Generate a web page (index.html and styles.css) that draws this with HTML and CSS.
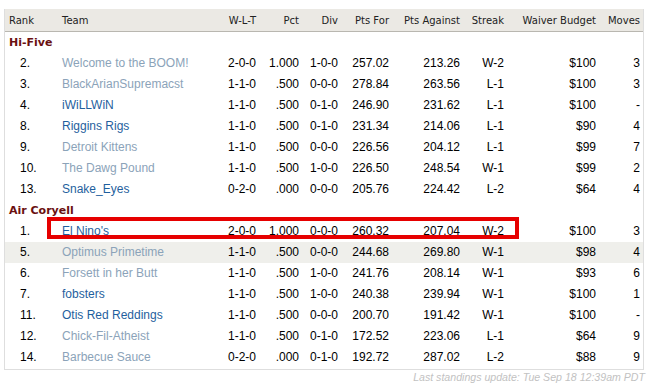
FILE: index.html
```html
<!DOCTYPE html>
<html>
<head>
<meta charset="utf-8">
<link rel="stylesheet" href="styles.css">
</head>
<body>
<div class="page">
  <div class="board">
    <table class="standings">
      <colgroup>
        <col class="c-rank"><col class="c-team"><col class="c-wlt"><col class="c-pct"><col class="c-div"><col class="c-pf"><col class="c-pa"><col class="c-streak"><col class="c-budget"><col class="c-moves">
      </colgroup>
      <thead>
        <tr>
          <th class="rank">Rank</th><th class="team">Team</th><th>W-L-T</th><th>Pct</th><th>Div</th><th>Pts For</th><th>Pts Against</th><th>Streak</th><th>Waiver Budget</th><th class="moves">Moves</th>
        </tr>
      </thead>
      <tbody>
        <tr class="division"><td colspan="10">Hi-Five</td></tr>
        <tr><td class="rank">2.</td><td class="team"><a class="visited" href="#">Welcome to the BOOM!</a></td><td>2-0-0</td><td>1.000</td><td>1-0-0</td><td>257.02</td><td>213.26</td><td>W-2</td><td>$100</td><td class="moves">3</td></tr>
        <tr><td class="rank">3.</td><td class="team"><a class="visited" href="#">BlackArianSupremacst</a></td><td>1-1-0</td><td>.500</td><td>0-0-0</td><td>278.84</td><td>263.56</td><td>L-1</td><td>$100</td><td class="moves">3</td></tr>
        <tr><td class="rank">4.</td><td class="team"><a href="#">iWiLLWiN</a></td><td>1-1-0</td><td>.500</td><td>0-1-0</td><td>246.90</td><td>231.62</td><td>L-1</td><td>$100</td><td class="moves">-</td></tr>
        <tr><td class="rank">8.</td><td class="team"><a href="#">Riggins Rigs</a></td><td>1-1-0</td><td>.500</td><td>0-1-0</td><td>231.34</td><td>214.06</td><td>L-1</td><td>$90</td><td class="moves">4</td></tr>
        <tr><td class="rank">9.</td><td class="team"><a class="visited" href="#">Detroit Kittens</a></td><td>1-1-0</td><td>.500</td><td>0-0-0</td><td>226.56</td><td>204.12</td><td>L-1</td><td>$99</td><td class="moves">7</td></tr>
        <tr><td class="rank">10.</td><td class="team"><a class="visited" href="#">The Dawg Pound</a></td><td>1-1-0</td><td>.500</td><td>1-0-0</td><td>226.50</td><td>248.54</td><td>W-1</td><td>$99</td><td class="moves">2</td></tr>
        <tr><td class="rank">13.</td><td class="team"><a href="#">Snake_Eyes</a></td><td>0-2-0</td><td>.000</td><td>0-0-0</td><td>205.76</td><td>224.42</td><td>L-2</td><td>$64</td><td class="moves">4</td></tr>
        <tr class="division"><td colspan="10">Air Coryell</td></tr>
        <tr><td class="rank">1.</td><td class="team"><a href="#">El Nino's</a></td><td>2-0-0</td><td>1.000</td><td>0-0-0</td><td>260.32</td><td>207.04</td><td>W-2</td><td>$100</td><td class="moves">3</td></tr>
        <tr class="hover"><td class="rank">5.</td><td class="team"><a class="visited" href="#">Optimus Primetime</a></td><td>1-1-0</td><td>.500</td><td>0-0-0</td><td>244.68</td><td>269.80</td><td>W-1</td><td>$98</td><td class="moves">4</td></tr>
        <tr><td class="rank">6.</td><td class="team"><a class="visited" href="#">Forsett in her Butt</a></td><td>1-1-0</td><td>.500</td><td>1-0-0</td><td>241.76</td><td>208.14</td><td>W-1</td><td>$93</td><td class="moves">6</td></tr>
        <tr><td class="rank">7.</td><td class="team"><a href="#">fobsters</a></td><td>1-1-0</td><td>.500</td><td>1-0-0</td><td>240.38</td><td>239.94</td><td>W-1</td><td>$100</td><td class="moves">1</td></tr>
        <tr><td class="rank">11.</td><td class="team"><a href="#">Otis Red Reddings</a></td><td>1-1-0</td><td>.500</td><td>0-0-0</td><td>200.70</td><td>191.42</td><td>W-1</td><td>$100</td><td class="moves">-</td></tr>
        <tr><td class="rank">12.</td><td class="team"><a class="visited" href="#">Chick-Fil-Atheist</a></td><td>1-1-0</td><td>.500</td><td>0-1-0</td><td>172.52</td><td>223.06</td><td>L-1</td><td>$64</td><td class="moves">9</td></tr>
        <tr><td class="rank">14.</td><td class="team"><a class="visited" href="#">Barbecue Sauce</a></td><td>0-2-0</td><td>.000</td><td>0-1-0</td><td>192.72</td><td>287.02</td><td>L-2</td><td>$88</td><td class="moves">9</td></tr>
      </tbody>
    </table>
    <div class="highlight"></div>
  </div>
  <p class="updated">Last standings update: Tue Sep 18 12:39am PDT</p>
</div>
</body>
</html>
```

FILE: styles.css
```css
html, body {
  margin: 0;
  padding: 0;
  background: #ffffff;
}

.page {
  padding: 9px 0 0 4px;
  width: 640px;
}

.board {
  position: relative;
  border: 1px solid #dedede;
  border-top: 0;
  padding-bottom: 1px;
}

.standings {
  width: 638px;
  table-layout: fixed;
  border-collapse: collapse;
  border-spacing: 0;
  font-family: "Liberation Sans", Arial, sans-serif;
  font-size: 12px;
  color: #000;
}

.c-rank { width: 52px; }
.c-team { width: 158px; }
.c-wlt { width: 45px; }
.c-pct { width: 43px; }
.c-div { width: 39px; }
.c-pf { width: 51px; }
.c-pa { width: 71px; }
.c-streak { width: 44px; }
.c-budget { width: 92px; }
.c-moves { width: 43px; }

.standings th {
  background: #ebe9e4;
  border-bottom: 1px solid #b9b7b0;
  font-family: "DejaVu Sans", Verdana, sans-serif;
  font-size: 10px;
  font-weight: normal;
  color: #222;
  height: 21px;
  padding: 1px 4px 0 0;
  text-align: right;
  white-space: nowrap;
}

.standings td {
  height: 21px;
  line-height: 21px;
  padding: 0 4px 0 0;
  text-align: right;
  white-space: nowrap;
  vertical-align: middle;
}

.standings th.rank {
  text-align: left;
  padding-left: 4px;
}

.standings td.rank {
  text-align: left;
  padding-left: 15px;
}

.standings .team {
  text-align: left;
  padding-left: 5px;
}

.standings .moves {
  padding-right: 3px;
}

.standings tr.division td {
  text-align: left;
  padding-left: 4px;
  font-family: "DejaVu Sans", Verdana, sans-serif;
  font-size: 11px;
  font-weight: bold;
  color: #6a1010;
}

.standings tr.hover td {
  background: #efefeb;
}

.standings a {
  color: #1f5f9e;
  text-decoration: none;
}

.standings a.visited {
  color: #8ba3b9;
}

.highlight {
  position: absolute;
  left: 42px;
  top: 208px;
  width: 464px;
  height: 14px;
  border: 4px solid #e60000;
}

.updated {
  margin: 0 -1px 0 0;
  font-family: "Liberation Sans", Arial, sans-serif;
  font-size: 10.6px;
  font-style: italic;
  line-height: 15px;
  color: #c2c2c2;
  text-align: right;
}
```
